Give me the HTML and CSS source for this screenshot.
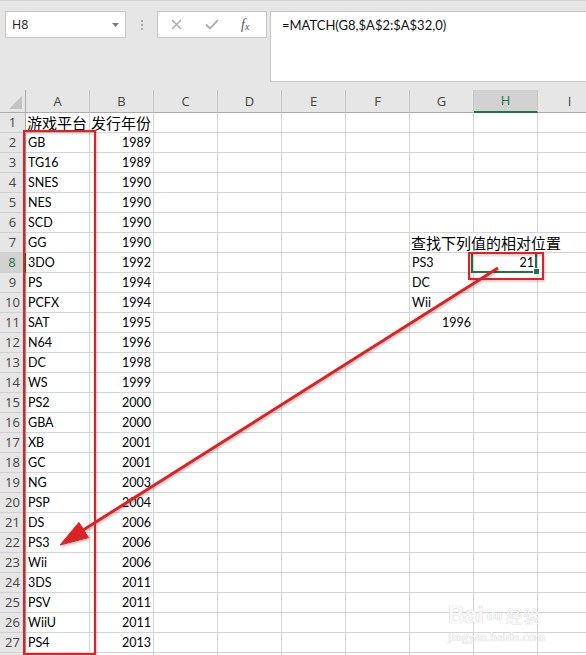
FILE: index.html
```html
<!DOCTYPE html>
<html>
<head>
<meta charset="utf-8">
<title>Excel MATCH</title>
<link rel="stylesheet" href="styles.css">
</head>
<body>
<div class="app">
  <div class="top">
    <div class="namebox">
      <span class="nm">H8</span>
      <svg class="dd" width="7" height="4" viewBox="0 0 7 4"><polygon points="0,0 7,0 3.5,4" fill="#7b7b7b"/></svg>
    </div>
    <div class="grip"><i></i><i></i><i></i></div>
    <div class="btns">
      <svg class="ic-x" width="11" height="11" viewBox="0 0 11 11"><path d="M1 1 L10 10 M10 1 L1 10" stroke="#a9a9a9" stroke-width="1.4" fill="none"/></svg>
      <svg class="ic-ok" width="14" height="11" viewBox="0 0 14 11"><path d="M1 5.5 L5 9.5 L13 1" stroke="#a9a9a9" stroke-width="1.8" fill="none"/></svg>
      <span class="fx">f<sub>x</sub></span>
    </div>
    <div class="formula">=MATCH(G8,$A$2:$A$32,0)</div>
  </div>

  <div class="sheet">
    <div class="corner"><svg width="13" height="13" viewBox="0 0 13 13"><polygon points="13,0 13,13 0,13" fill="#c4c4c4"/></svg></div>
    <div class="ch">A</div><div class="ch">B</div><div class="ch">C</div><div class="ch">D</div><div class="ch">E</div><div class="ch">F</div><div class="ch">G</div><div class="ch csel">H</div><div class="ch">I</div>

    <div class="rh">1</div><div class="cj">游戏平台</div><div class="cj">发行年份</div><div></div><div></div><div></div><div></div><div></div><div></div><div></div>
    <div class="rh">2</div><div>GB</div><div class="n">1989</div><div></div><div></div><div></div><div></div><div></div><div></div><div></div>
    <div class="rh">3</div><div>TG16</div><div class="n">1989</div><div></div><div></div><div></div><div></div><div></div><div></div><div></div>
    <div class="rh">4</div><div>SNES</div><div class="n">1990</div><div></div><div></div><div></div><div></div><div></div><div></div><div></div>
    <div class="rh">5</div><div>NES</div><div class="n">1990</div><div></div><div></div><div></div><div></div><div></div><div></div><div></div>
    <div class="rh">6</div><div>SCD</div><div class="n">1990</div><div></div><div></div><div></div><div></div><div></div><div></div><div></div>
    <div class="rh">7</div><div>GG</div><div class="n">1990</div><div></div><div></div><div></div><div></div><div class="cj span3">查找下列值的相对位置</div>
    <div class="rh rsel">8</div><div>3DO</div><div class="n">1992</div><div></div><div></div><div></div><div></div><div>PS3</div><div class="n active">21</div><div></div>
    <div class="rh">9</div><div>PS</div><div class="n">1994</div><div></div><div></div><div></div><div></div><div>DC</div><div></div><div></div>
    <div class="rh">10</div><div>PCFX</div><div class="n">1994</div><div></div><div></div><div></div><div></div><div>Wii</div><div></div><div></div>
    <div class="rh">11</div><div>SAT</div><div class="n">1995</div><div></div><div></div><div></div><div></div><div class="n">1996</div><div></div><div></div>
    <div class="rh">12</div><div>N64</div><div class="n">1996</div><div></div><div></div><div></div><div></div><div></div><div></div><div></div>
    <div class="rh">13</div><div>DC</div><div class="n">1998</div><div></div><div></div><div></div><div></div><div></div><div></div><div></div>
    <div class="rh">14</div><div>WS</div><div class="n">1999</div><div></div><div></div><div></div><div></div><div></div><div></div><div></div>
    <div class="rh">15</div><div>PS2</div><div class="n">2000</div><div></div><div></div><div></div><div></div><div></div><div></div><div></div>
    <div class="rh">16</div><div>GBA</div><div class="n">2000</div><div></div><div></div><div></div><div></div><div></div><div></div><div></div>
    <div class="rh">17</div><div>XB</div><div class="n">2001</div><div></div><div></div><div></div><div></div><div></div><div></div><div></div>
    <div class="rh">18</div><div>GC</div><div class="n">2001</div><div></div><div></div><div></div><div></div><div></div><div></div><div></div>
    <div class="rh">19</div><div>NG</div><div class="n">2003</div><div></div><div></div><div></div><div></div><div></div><div></div><div></div>
    <div class="rh">20</div><div>PSP</div><div class="n">2004</div><div></div><div></div><div></div><div></div><div></div><div></div><div></div>
    <div class="rh">21</div><div>DS</div><div class="n">2006</div><div></div><div></div><div></div><div></div><div></div><div></div><div></div>
    <div class="rh">22</div><div>PS3</div><div class="n">2006</div><div></div><div></div><div></div><div></div><div></div><div></div><div></div>
    <div class="rh">23</div><div>Wii</div><div class="n">2006</div><div></div><div></div><div></div><div></div><div></div><div></div><div></div>
    <div class="rh">24</div><div>3DS</div><div class="n">2011</div><div></div><div></div><div></div><div></div><div></div><div></div><div></div>
    <div class="rh">25</div><div>PSV</div><div class="n">2011</div><div></div><div></div><div></div><div></div><div></div><div></div><div></div>
    <div class="rh">26</div><div>WiiU</div><div class="n">2011</div><div></div><div></div><div></div><div></div><div></div><div></div><div></div>
    <div class="rh">27</div><div>PS4</div><div class="n">2013</div><div></div><div></div><div></div><div></div><div></div><div></div><div></div>
    <div class="rh"></div><div></div><div></div><div></div><div></div><div></div><div></div><div></div><div></div><div></div>
  </div>

  <div class="wm">
    <div class="wm-top"><span class="wm-bai">Bai</span><span class="wm-du">du</span><span class="wm-jy">经验</span></div>
    <div class="wm-url">jingyan.baidu.com</div>
  </div>

  <svg class="annot" width="586" height="655" viewBox="0 0 586 655">
    <defs>
      <filter id="sh" x="-10%" y="-10%" width="120%" height="120%">
        <feDropShadow dx="1" dy="1.5" stdDeviation="1" flood-color="#000" flood-opacity="0.25"/>
      </filter>
    </defs>
    <g filter="url(#sh)" fill="none" stroke="#db2426" stroke-width="2">
      <rect x="24" y="131" width="71" height="523"/>
      <rect x="469" y="253" width="74" height="26"/>
      <line x1="498" y1="268" x2="80" y2="532" stroke-width="3"/>
      <polygon points="60,545 88.5,537.6 78.9,522.4" fill="#db2426" stroke-width="1"/>
    </g>
  </svg>
</div>
</body>
</html>
```

FILE: styles.css
```css
html, body {
  margin: 0;
  padding: 0;
  background: #ffffff;
}
body {
  overflow: hidden;
}
.app {
  position: relative;
  width: 586px;
  height: 655px;
  overflow: hidden;
  font-family: "Lato", "Liberation Sans", sans-serif;
}

/* ---------- formula bar ---------- */
.top {
  height: 90px;
  box-sizing: border-box;
  background: #e6e6e6;
  border-top: 1px solid #d2d2d2;
  padding: 10px 0 0 5px;
  display: flex;
  align-items: flex-start;
}
.namebox {
  width: 121px;
  height: 27px;
  box-sizing: border-box;
  background: #fff;
  border: 1px solid #c6c6c6;
  display: flex;
  align-items: center;
  justify-content: space-between;
  padding: 0 6px 0 6px;
}
.nm {
  font-family: "Open Sans", "Noto Sans", sans-serif;
  font-size: 12.5px;
  color: #222;
}
.dd {
  display: block;
  margin-top: 1px;
}
.grip {
  width: 31px;
  height: 27px;
  display: flex;
  flex-direction: column;
  align-items: center;
  justify-content: center;
  gap: 2px;
}
.grip i {
  display: block;
  width: 2px;
  height: 2px;
  background: #a8a8a8;
}
.btns {
  width: 110px;
  height: 27px;
  box-sizing: border-box;
  background: #fff;
  border: 1px solid #c6c6c6;
  display: flex;
  align-items: center;
}
.ic-x {
  display: block;
  margin-left: 13px;
}
.ic-ok {
  display: block;
  margin-left: 23px;
}
.fx {
  margin-left: 22px;
  font-family: "Liberation Serif", "DejaVu Serif", serif;
  font-style: italic;
  font-size: 14px;
  color: #555;
  line-height: 1;
}
.fx sub {
  font-size: 10px;
  vertical-align: -1px;
}
.formula {
  flex: 1;
  margin-left: 3px;
  margin-right: -2px;
  height: 71px;
  box-sizing: border-box;
  background: #fff;
  border: 1px solid #c6c6c6;
  padding: 4px 11px;
  font-family: "Lato", "Liberation Sans", sans-serif;
  font-size: 13px;
  line-height: 18px;
  color: #111;
  white-space: nowrap;
}

/* ---------- sheet ---------- */
.sheet {
  display: grid;
  grid-template-columns: 26px repeat(9, 64px);
  grid-template-rows: 23px;
  grid-auto-rows: 20px;
  width: 602px;
}
.sheet > div {
  box-sizing: border-box;
  border-right: 1px solid #d4d4d4;
  border-bottom: 1px solid #d4d4d4;
  font-size: 12.5px;
  line-height: 19px;
  padding: 0 2px;
  color: #000;
  white-space: nowrap;
  overflow: visible;
}
.sheet > .n {
  text-align: right;
}
.sheet > .cj {
  font-family: "Noto Sans CJK SC", "Lato", sans-serif;
  font-size: 15px;
  line-height: 19px;
  padding-left: 1px;
  padding-right: 0;
}
.sheet > .span3 {
  grid-column: span 3;
}
.sheet > .corner {
  background: #e6e6e6;
  border-right: 1px solid #ababab;
  border-bottom: 1px solid #ababab;
  display: flex;
  align-items: flex-end;
  justify-content: flex-end;
  padding: 0 3px 3px 0;
}
.corner svg {
  display: block;
}
.sheet > .ch {
  background: #e6e6e6;
  border-right: 1px solid #c8c8c8;
  border-bottom: 1px solid #ababab;
  text-align: center;
  font-family: "Open Sans", "Noto Sans", sans-serif;
  font-size: 13px;
  line-height: 22px;
  color: #444;
  padding: 0;
}
.sheet > .ch.csel {
  background: #d2d2d2;
  color: #217346;
  border-bottom: 2px solid #217346;
  line-height: 21px;
}
.sheet > .rh {
  background: #e6e6e6;
  border-right: 1px solid #ababab;
  border-bottom: 1px solid #d0d0d0;
  text-align: center;
  font-family: "Open Sans", "Noto Sans", sans-serif;
  font-size: 13px;
  line-height: 19px;
  color: #444;
  padding: 0;
}
.sheet > .rh.rsel {
  background: #d2d2d2;
  color: #217346;
  border-right: 2px solid #217346;
}
.sheet > .active {
  position: relative;
  padding-right: 3px;
}
.active::after {
  content: "";
  position: absolute;
  left: -3px;
  top: -1px;
  right: 0;
  bottom: -1px;
  border: 2px solid #217346;
}
.active::before {
  content: "";
  position: absolute;
  right: -3px;
  bottom: -3px;
  width: 5px;
  height: 5px;
  background: #217346;
  border: 1px solid #fff;
  z-index: 1;
}

/* ---------- watermark ---------- */
.wm {
  position: absolute;
  left: 448px;
  top: 598px;
  width: 110px;
  color: rgba(255, 255, 255, 0.9);
  text-shadow: 0 0 1px #d0d0d0, 0 0 1px #d0d0d0;
  font-family: "Liberation Sans", sans-serif;
}
.wm-top {
  display: flex;
  align-items: flex-end;
  height: 30px;
}
.wm-bai {
  font-size: 23px;
  font-weight: bold;
  line-height: 26px;
}
.wm-du {
  font-size: 13px;
  font-weight: bold;
  line-height: 18px;
  margin: 0 3px 3px 3px;
}
.wm-jy {
  font-family: "Noto Sans CJK SC", sans-serif;
  font-size: 17px;
  line-height: 24px;
}
.wm-url {
  font-family: "Liberation Serif", serif;
  font-size: 13px;
  line-height: 14px;
  margin-top: 2px;
}

/* ---------- annotations ---------- */
.annot {
  position: absolute;
  left: 0;
  top: 0;
  pointer-events: none;
}
```
